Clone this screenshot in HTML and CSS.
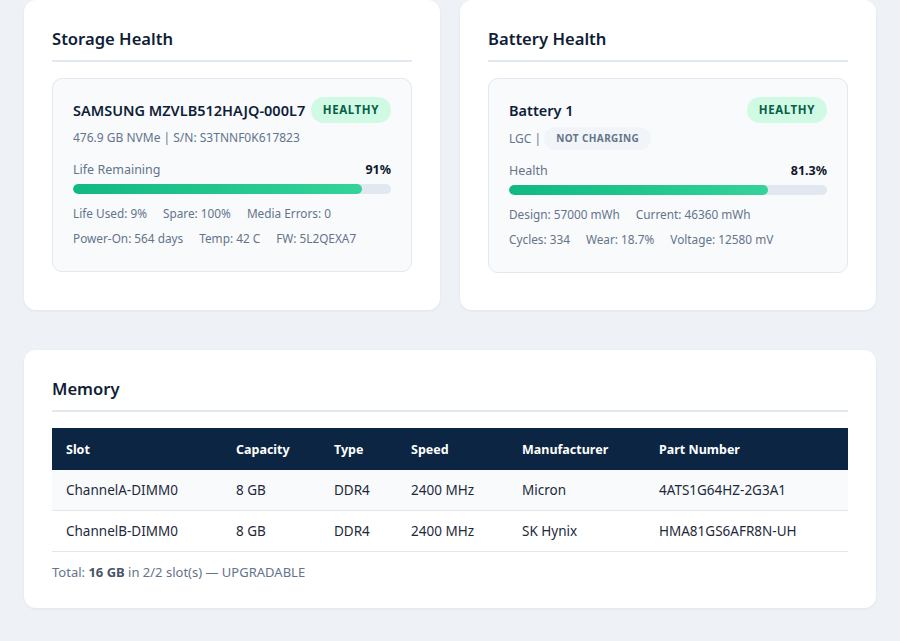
FILE: index.html
```html
<!DOCTYPE html>
<html lang="en">
<head>
    <meta charset="UTF-8">
    <meta name="viewport" content="width=device-width, initial-scale=1.0">
    <title>System Health</title>
    <link rel="stylesheet" href="styles.css">
</head>
<body>
    <div class="page">
        <div class="row">
            <section class="card">
                <h2>Storage Health</h2>
                <div class="device">
                    <div class="device-head">
                        <span class="device-name">SAMSUNG MZVLB512HAJQ-000L7</span>
                        <span class="badge">HEALTHY</span>
                    </div>
                    <div class="device-meta">476.9 GB NVMe | S/N: S3TNNF0K617823</div>
                    <div class="bar-label">
                        <span>Life Remaining</span>
                        <strong>91%</strong>
                    </div>
                    <div class="bar"><div class="bar-fill" style="width: 91%"></div></div>
                    <div class="stats">
                        <span>Life Used: 9%</span>
                        <span>Spare: 100%</span>
                        <span>Media Errors: 0</span>
                    </div>
                    <div class="stats">
                        <span>Power-On: 564 days</span>
                        <span>Temp: 42 C</span>
                        <span>FW: 5L2QEXA7</span>
                    </div>
                </div>
            </section>

            <section class="card">
                <h2>Battery Health</h2>
                <div class="device">
                    <div class="device-head">
                        <span class="device-name">Battery 1</span>
                        <span class="badge">HEALTHY</span>
                    </div>
                    <div class="device-meta">LGC |&nbsp;<span class="pill">NOT CHARGING</span></div>
                    <div class="bar-label">
                        <span>Health</span>
                        <strong>81.3%</strong>
                    </div>
                    <div class="bar"><div class="bar-fill" style="width: 81.3%"></div></div>
                    <div class="stats">
                        <span>Design: 57000 mWh</span>
                        <span>Current: 46360 mWh</span>
                    </div>
                    <div class="stats">
                        <span>Cycles: 334</span>
                        <span>Wear: 18.7%</span>
                        <span>Voltage: 12580 mV</span>
                    </div>
                </div>
            </section>
        </div>

        <section class="card">
            <h2>Memory</h2>
            <table class="mem-table">
                <colgroup>
                    <col style="width: 170px">
                    <col style="width: 98px">
                    <col style="width: 77px">
                    <col style="width: 111px">
                    <col style="width: 137px">
                    <col>
                </colgroup>
                <thead>
                    <tr>
                        <th>Slot</th>
                        <th>Capacity</th>
                        <th>Type</th>
                        <th>Speed</th>
                        <th>Manufacturer</th>
                        <th>Part Number</th>
                    </tr>
                </thead>
                <tbody>
                    <tr>
                        <td>ChannelA-DIMM0</td>
                        <td>8 GB</td>
                        <td>DDR4</td>
                        <td>2400 MHz</td>
                        <td>Micron</td>
                        <td>4ATS1G64HZ-2G3A1</td>
                    </tr>
                    <tr>
                        <td>ChannelB-DIMM0</td>
                        <td>8 GB</td>
                        <td>DDR4</td>
                        <td>2400 MHz</td>
                        <td>SK Hynix</td>
                        <td>HMA81GS6AFR8N-UH</td>
                    </tr>
                </tbody>
            </table>
            <p class="mem-total">Total: <strong>16 GB</strong> in 2/2 slot(s) — UPGRADABLE</p>
        </section>
    </div>
</body>
</html>
```

FILE: styles.css
```css
body {
    margin: 0;
    background: #eef2f7;
    font-family: "Noto Sans", "Open Sans", sans-serif;
    color: #1e293b;
}
.page {
    padding: 0 24px 33px;
    display: flex;
    flex-direction: column;
    gap: 40px;
}
.row {
    display: grid;
    grid-template-columns: 1fr 1fr;
    gap: 20px;
}
.card {
    background: #fff;
    border-radius: 12px;
    padding: 27px 28px 28px;
    box-shadow: 0 1px 3px rgba(15, 30, 54, 0.06);
}
.card h2 {
    margin: 0 0 16px;
    padding-bottom: 9px;
    border-bottom: 2px solid #e2e8f0;
    font-size: 16.6px;
    line-height: 24px;
    font-weight: 600;
    color: #0f1e36;
}
.device {
    background: #f8fafc;
    border: 1px solid #e2e8f0;
    border-radius: 10px;
    padding: 18px 20px 25px;
    margin-bottom: 9px;
}
.device-head {
    display: flex;
    justify-content: space-between;
    align-items: center;
    height: 26px;
}
.device-name {
    font-size: 14.5px;
    font-weight: 600;
    color: #0f1e36;
    white-space: nowrap;
}
.badge {
    background: #d1fae5;
    color: #065f46;
    font-size: 11.5px;
    font-weight: 700;
    letter-spacing: 0.6px;
    padding: 0 12px;
    line-height: 26px;
    border-radius: 13px;
    flex-shrink: 0;
}
.device-meta {
    display: flex;
    align-items: center;
    min-height: 22px;
    margin-top: 4px;
    font-size: 12px;
    line-height: 18px;
    color: #64748b;
}
.pill {
    display: inline-block;
    background: #f1f5f9;
    color: #64748b;
    font-size: 10px;
    font-weight: 700;
    letter-spacing: 0.4px;
    padding: 0 12px;
    line-height: 23px;
    border-radius: 12px;
}
.bar-label {
    display: flex;
    justify-content: space-between;
    margin-top: 12px;
    font-size: 12.5px;
    line-height: 18px;
    color: #64748b;
}
.bar-label strong {
    color: #0f172a;
}
.bar {
    margin-top: 5px;
    height: 10px;
    background: #e2e8f0;
    border-radius: 5px;
    overflow: hidden;
}
.bar-fill {
    height: 100%;
    border-radius: 5px;
    background: linear-gradient(90deg, #10b981, #34d399);
}
.stats {
    display: flex;
    gap: 16px;
    margin-top: 9px;
    font-size: 11.8px;
    line-height: 16px;
    color: #64748b;
}
.bar + .stats {
    margin-top: 11px;
}
.mem-table {
    width: 100%;
    border-collapse: collapse;
    table-layout: fixed;
    font-size: 13.5px;
}
.mem-table th {
    background: #0b2542;
    color: #fff;
    text-align: left;
    font-weight: 700;
    font-size: 12.5px;
    padding: 0 14px;
    height: 42px;
}
.mem-table td {
    padding: 0 14px;
    height: 40px;
    border-bottom: 1px solid #e2e8f0;
    color: #1e293b;
}
.mem-table tbody tr:nth-child(odd) {
    background: #f8fafc;
}
.mem-total {
    margin: 12px 0 0;
    font-size: 13px;
    line-height: 16px;
    color: #64748b;
}
.mem-total strong {
    color: #475569;
}
```
